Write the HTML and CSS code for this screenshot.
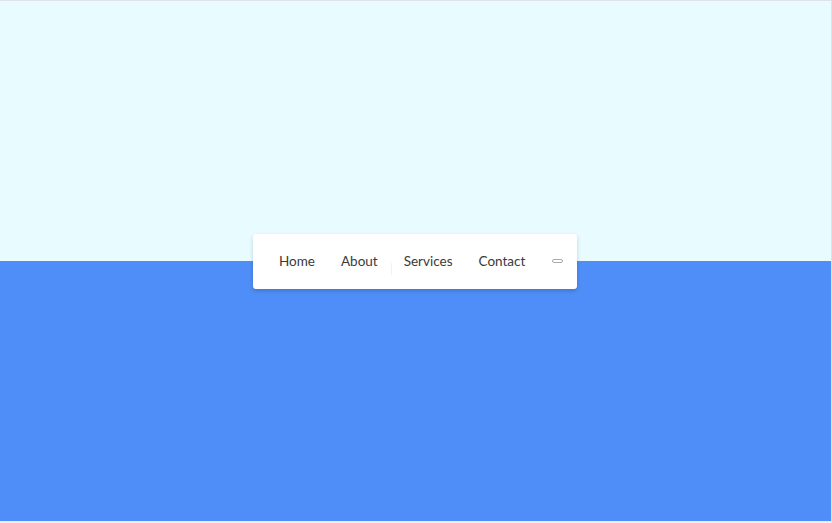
FILE: index.html
```html
<!DOCTYPE html>
<html lang="en">
<head>
<meta charset="utf-8">
<title>Nav</title>
<link rel="stylesheet" href="styles.css">
</head>
<body>
<div class="page">
  <div class="sky"></div>
  <div class="sea"></div>
  <nav class="nav">
    <a class="link" href="#">Home</a>
    <a class="link" href="#">About</a>
    <span class="divider"></span>
    <a class="link" href="#">Services</a>
    <a class="link" href="#">Contact</a>
    <span class="toggle"><span class="pill"></span></span>
  </nav>
</div>
</body>
</html>
```
FILE: styles.css
```css
* { box-sizing: border-box; }
html, body { margin: 0; padding: 0; }
body { font-family: "Lato", "Open Sans", sans-serif; background: #eef2f5; }
.page {
  position: relative;
  width: 832px;
  height: 522px;
  border-top: 1px solid #dde3e6;
  border-right: 1px solid #dde3e6;
  border-bottom: 1px solid #e6eef5;
  display: grid;
  grid-template-rows: 260px 260px;
}
.sky { background: #e8fcff; }
.sea { background: #4f8ef8; }
.nav {
  position: absolute;
  left: 253px;
  top: 233px;
  width: 324px;
  height: 55px;
  background: #fff;
  border-radius: 3px;
  box-shadow: 0 2px 4px rgba(0, 0, 0, 0.18);
  display: flex;
  align-items: center;
  padding: 0 0 2px 13px;
}
.link {
  font-size: 13.5px;
  font-weight: 400;
  color: #3a3a3a;
  text-decoration: none;
  padding: 0 13px;
  line-height: 20px;
}
.divider {
  width: 1px;
  height: 12px;
  background: #f2f2f2;
  margin: 16px -1px 0 0;
}
.toggle {
  display: flex;
  align-items: center;
  padding: 0 13px 0 14px;
}
.pill {
  width: 11px;
  height: 4px;
  border: 1px solid #aaa;
  border-radius: 2px;
}
```
